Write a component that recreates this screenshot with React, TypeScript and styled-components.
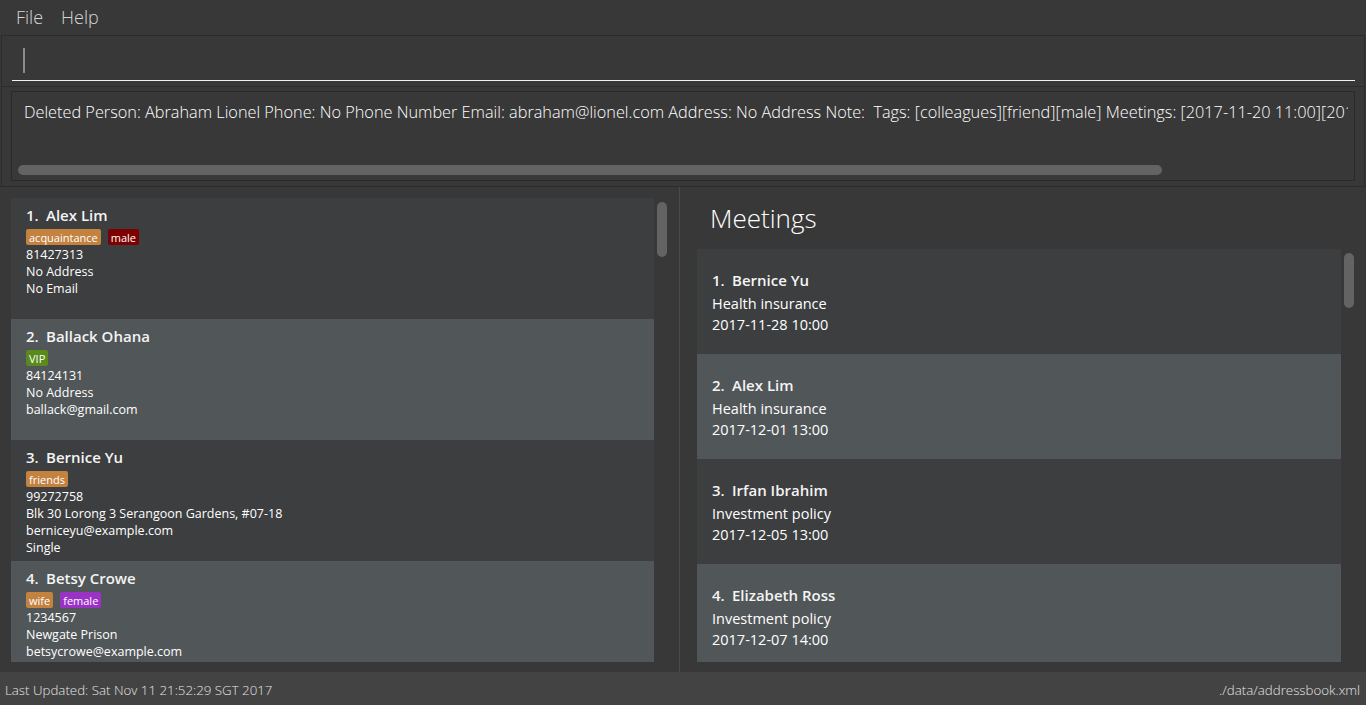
import React from 'react';
import styled, {createGlobalStyle} from 'styled-components';

const GlobalStyle = createGlobalStyle`
    html, body {
        margin: 0;
        padding: 0;
        background: #383838;
    }
    * {
        box-sizing: border-box;
    }
`;

const UI_FONT = `"Open Sans", "Noto Sans", sans-serif`;

interface Tag {
    label: string;
    color: string;
}

interface Person {
    name: string;
    tags: Tag[];
    details: string[];
}

interface Meeting {
    name: string;
    title: string;
    time: string;
}

const ORANGE = '#c4823f';

const persons: Person[] = [
    {
        name: 'Alex Lim',
        tags: [{label: 'acquaintance', color: ORANGE}, {label: 'male', color: '#7e0000'}],
        details: ['81427313', 'No Address', 'No Email']
    },
    {
        name: 'Ballack Ohana',
        tags: [{label: 'VIP', color: '#5b8a1c'}],
        details: ['84124131', 'No Address', 'ballack@gmail.com']
    },
    {
        name: 'Bernice Yu',
        tags: [{label: 'friends', color: ORANGE}],
        details: ['99272758', 'Blk 30 Lorong 3 Serangoon Gardens, #07-18', 'berniceyu@example.com', 'Single']
    },
    {
        name: 'Betsy Crowe',
        tags: [{label: 'wife', color: ORANGE}, {label: 'female', color: '#9a32c6'}],
        details: ['1234567', 'Newgate Prison', 'betsycrowe@example.com']
    }
];

const meetings: Meeting[] = [
    {name: 'Bernice Yu', title: 'Health insurance', time: '2017-11-28 10:00'},
    {name: 'Alex Lim', title: 'Health insurance', time: '2017-12-01 13:00'},
    {name: 'Irfan Ibrahim', title: 'Investment policy', time: '2017-12-05 13:00'},
    {name: 'Elizabeth Ross', title: 'Investment policy', time: '2017-12-07 14:00'}
];

// the display clips this line at its right edge, as the app does
const RESULT_TEXT = 'Deleted Person: Abraham Lionel Phone: No Phone Number Email: abraham@lionel.com Address: No Address Note:  Tags: [colleagues][friend][male] Meetings: [2017-11-20 11:00][2017-1';

function App() {
    return (
        <>
            <GlobalStyle/>
            <Window>
                <MenuBar>
                    <MenuLabel>File</MenuLabel>
                    <MenuLabel>Help</MenuLabel>
                </MenuBar>

                <CommandSection>
                    <CommandField>
                        <Caret/>
                    </CommandField>
                </CommandSection>

                <ResultSection>
                    <ResultBox>
                        <ResultText>{RESULT_TEXT}</ResultText>
                        <HScrollTrack>
                            <HScrollThumb/>
                        </HScrollTrack>
                    </ResultBox>
                </ResultSection>

                <SplitPane>
                    <PersonPane>
                        <ListFrame>
                            <CardList>
                                {persons.map((p, i) => (
                                    <PersonCard key={p.name} $odd={i % 2 === 1}>
                                        <CardName>
                                            <Index>{i + 1}.</Index>{p.name}
                                        </CardName>
                                        <TagRow>
                                            {p.tags.map(t => (
                                                <TagChip key={t.label} $color={t.color}>{t.label}</TagChip>
                                            ))}
                                        </TagRow>
                                        {p.details.map(d => <DetailLine key={d}>{d}</DetailLine>)}
                                    </PersonCard>
                                ))}
                            </CardList>
                            <VScrollGutter>
                                <VScrollThumb/>
                            </VScrollGutter>
                        </ListFrame>
                    </PersonPane>

                    <Divider/>

                    <MeetingPane>
                        <PaneTitle>Meetings</PaneTitle>
                        <ListFrame>
                            <CardList>
                                {meetings.map((m, i) => (
                                    <MeetingCard key={m.name} $odd={i % 2 === 1}>
                                        <MeetingName>
                                            <Index>{i + 1}.</Index>{m.name}
                                        </MeetingName>
                                        <MeetingLine>{m.title}</MeetingLine>
                                        <MeetingLine>{m.time}</MeetingLine>
                                    </MeetingCard>
                                ))}
                            </CardList>
                            <VScrollGutter>
                                <VScrollThumb/>
                            </VScrollGutter>
                        </ListFrame>
                    </MeetingPane>
                </SplitPane>

                <StatusBar>
                    <StatusText>Last Updated: Sat Nov 11 21:52:29 SGT 2017</StatusText>
                    <StatusText>./data/addressbook.xml</StatusText>
                </StatusBar>
            </Window>
        </>
    );
}

const Window = styled.div`
    width: 1366px;
    height: 705px;
    display: flex;
    flex-direction: column;
    background: #383838;
    overflow: hidden;
    font-family: ${UI_FONT};
`;

const MenuBar = styled.div`
    height: 35px;
    display: flex;
    align-items: center;
    gap: 18px;
    padding: 0 0 1px 16px;
    background: #383838;
`;

const MenuLabel = styled.span`
    font-size: 18px;
    font-weight: 300;
    color: #d6d6d6;
`;

const CommandSection = styled.div`
    height: 52px;
    margin: 0 1px;
    border: 1px solid #2c2c2c;
    padding: 10px 9px 0 10px;
`;

const CommandField = styled.div`
    height: 35px;
    border-bottom: 1px solid #f2f2f2;
    padding: 2px 0 0 11px;
`;

const Caret = styled.div`
    width: 2px;
    height: 25px;
    background: #8c8c8c;
`;

const ResultSection = styled.div`
    height: 100px;
    margin: 0 1px;
    border: 1px solid #2c2c2c;
    border-top: none;
    padding: 4px 9px 4px 9px;
`;

const ResultBox = styled.div`
    height: 90px;
    border: 1px solid #2a2a2a;
    display: flex;
    flex-direction: column;
    justify-content: space-between;
    padding: 9px 6px 4px 6px;
    overflow: hidden;
`;

const ResultText = styled.div`
    padding-left: 6px;
    font-size: 16.3px;
    font-weight: 300;
    color: #ffffff;
    white-space: pre;
    overflow: hidden;
`;

const HScrollTrack = styled.div`
    height: 11px;
`;

const HScrollThumb = styled.div`
    width: 1144px;
    height: 10px;
    border-radius: 5px;
    background: #636363;
`;

const SplitPane = styled.div`
    flex: 1;
    min-height: 0;
    display: grid;
    grid-template-columns: 679px 1px 1fr;
    border-top: 1px solid #2c2c2c;
    margin-top: -1px;
`;

const PersonPane = styled.div`
    min-height: 0;
    display: flex;
    flex-direction: column;
    padding: 11px 10px 10px 11px;
`;

const MeetingPane = styled.div`
    min-height: 0;
    display: flex;
    flex-direction: column;
    padding: 0 10px 10px 17px;
`;

const Divider = styled.div`
    background: #4a4a4a;
`;

const PaneTitle = styled.div`
    height: 62px;
    padding: 13px 0 0 13px;
    font-size: 26px;
    font-weight: 300;
    color: #ffffff;
`;

const ListFrame = styled.div`
    flex: 1;
    min-height: 0;
    display: grid;
    grid-template-columns: 1fr 15px;
`;

const CardList = styled.div`
    min-height: 0;
    overflow: hidden;
`;

const VScrollGutter = styled.div`
    padding: 4px 2px 0 3px;
`;

const VScrollThumb = styled.div`
    height: 55px;
    border-radius: 5px;
    background: #636363;
`;

const PersonCard = styled.div<{ $odd: boolean }>`
    height: 121px;
    padding: 5px 0 0 15px;
    background: ${p => (p.$odd ? '#515658' : '#3c3e3f')};
    color: #ffffff;
`;

const MeetingCard = styled.div<{ $odd: boolean }>`
    height: 105px;
    padding: 19px 0 0 15px;
    background: ${p => (p.$odd ? '#515658' : '#3c3e3f')};
    color: #ffffff;
`;

const CardName = styled.div`
    height: 24px;
    line-height: 24px;
    font-size: 15px;
    font-weight: 600;
    color: #f4f4f4;
`;

const MeetingName = styled(CardName)`
    margin-bottom: 1px;
`;

const Index = styled.span`
    display: inline-block;
    width: 20px;
`;

const TagRow = styled.div`
    display: flex;
    gap: 7px;
    margin-top: 2px;
    height: 16px;
`;

const TagChip = styled.span<{ $color: string }>`
    height: 16px;
    line-height: 17px;
    padding: 0 3px;
    border-radius: 2px;
    background: ${p => p.$color};
    font-size: 11px;
    color: #ffffff;
`;

const DetailLine = styled.div`
    height: 17px;
    line-height: 19px;
    font-size: 12.5px;
    color: #ffffff;
    white-space: nowrap;
`;

const MeetingLine = styled.div`
    height: 21px;
    line-height: 21px;
    font-size: 14.5px;
    color: #ffffff;
`;

const StatusBar = styled.div`
    height: 33px;
    display: flex;
    align-items: center;
    justify-content: space-between;
    padding: 2px 6px 0 5px;
    background: #434343;
`;

const StatusText = styled.span`
    font-size: 13.3px;
    font-weight: 300;
    color: #e4e4e4;
`;

export default App;
